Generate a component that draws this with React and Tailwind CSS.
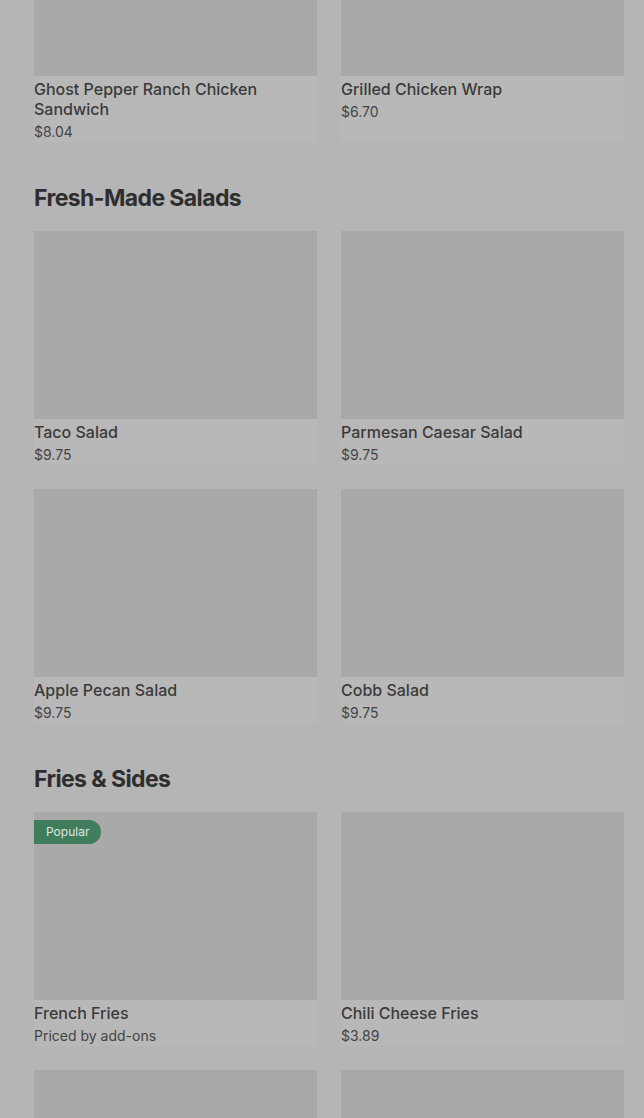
const sections = [
  {
    title: null,
    items: [
      { name: "Ghost Pepper Ranch Chicken Sandwich", price: "$8.04" },
      { name: "Grilled Chicken Wrap", price: "$6.70" },
    ],
  },
  {
    title: "Fresh-Made Salads",
    items: [
      { name: "Taco Salad", price: "$9.75" },
      { name: "Parmesan Caesar Salad", price: "$9.75" },
      { name: "Apple Pecan Salad", price: "$9.75" },
      { name: "Cobb Salad", price: "$9.75" },
    ],
  },
  {
    title: "Fries & Sides",
    items: [
      { name: "French Fries", price: "Priced by add-ons", popular: true },
      { name: "Chili Cheese Fries", price: "$3.89" },
      { id: "next-1" },
      { id: "next-2" },
    ],
  },
];

const MenuCard = ({ item }) => (
  <div className="bg-[#b8b8b8]">
    <div className="relative h-[188px] bg-[#a9a9a9]">
      {item.popular && (
        <span className="absolute left-0 top-2 h-6 pl-3 pr-3 flex items-center rounded-r-full bg-[#3f7d5c] text-[12px] text-[#dfe6e2]">
          Popular
        </span>
      )}
    </div>
    {item.name && (
      <>
        <p className="mt-[3px] text-[16px] leading-5 font-medium text-[#3a3a3a]">{item.name}</p>
        <p className="mt-[3px] text-[14px] leading-5 text-[#444444]">{item.price}</p>
      </>
    )}
  </div>
);

export default function App() {
  return (
    <div
      className="h-[1118px] overflow-hidden bg-[#b5b5b5] pl-[34px] pr-[20px]"
      style={{ fontFamily: "Inter, 'Noto Sans', sans-serif" }}
    >
      <div className="-mt-[112px]">
        {sections.map((section, i) => (
          <section key={i} className={i > 0 ? "mt-10" : ""}>
            {section.title && (
              <h2 className="h-8 mb-[17px] flex items-center text-[23px] font-bold tracking-[-0.6px] text-[#2e2e2e]">
                {section.title}
              </h2>
            )}
            <div className="grid grid-cols-2 gap-x-6 gap-y-6">
              {section.items.map((item) => (
                <MenuCard key={item.name || item.id} item={item} />
              ))}
            </div>
          </section>
        ))}
      </div>
    </div>
  );
}
